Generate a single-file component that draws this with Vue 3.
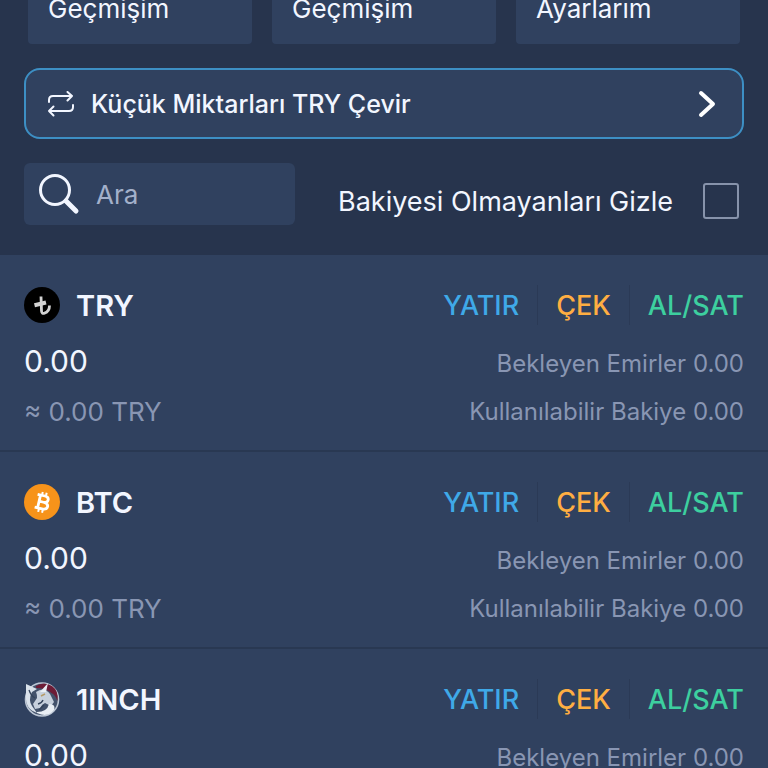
<script setup>
import {ref, computed} from "vue";

const tabs = ["İşlem Geçmişim", "Emir Geçmişim", "Hesap Ayarlarım"];

const coins = ref([
  {symbol: "TRY", amount: "0.00", value: "0.00", orders: "0.00", available: "0.00"},
  {symbol: "BTC", amount: "0.00", value: "0.00", orders: "0.00", available: "0.00"},
  {symbol: "1INCH", amount: "0.00", value: "0.00", orders: "0.00", available: "0.00"}
]);

const search = ref("");
const hideEmpty = ref(false);

const lastWord = (label)=> label.split(" ").pop();

const visibleCoins = computed(()=>{
  return coins.value.filter((coin)=>{
    if(hideEmpty.value && Number(coin.amount) === 0) return false;
    return coin.symbol.toLowerCase().includes(search.value.toLowerCase());
  });
});
</script>

<template>
  <div class="wallet">
    <header class="top">
      <nav class="tabs">
        <button v-for="tab in tabs" :key="tab" class="tab">{{ lastWord(tab) }}</button>
      </nav>

      <button class="convert">
        <svg class="convert-icon" viewBox="0 0 28 26" fill="none" stroke="currentColor" stroke-width="2" stroke-linecap="round" stroke-linejoin="round">
          <path d="M2 11V9q0-4 4-4h19M20.500 1L25 5l-4.500 4.500" />
          <path d="M26 14v2q0 4-4 4H2M6.500 15.500L2 20l4.500 4.500" />
        </svg>
        <span class="convert-text">Küçük Miktarları TRY Çevir</span>
        <svg class="convert-arrow" viewBox="0 0 18 30" fill="none" stroke="currentColor" stroke-width="4" stroke-linecap="round" stroke-linejoin="round">
          <path d="M3 4l12 11L3 26" />
        </svg>
      </button>

      <div class="filters">
        <label class="search">
          <svg class="search-icon" viewBox="0 0 42 42" fill="none" stroke="currentColor" stroke-linecap="round">
            <circle cx="17" cy="17" r="14.500" stroke-width="3" />
            <path d="M28 28l10 10" stroke-width="5" />
          </svg>
          <input v-model="search" class="search-input" type="text" placeholder="Ara" aria-label="Ara">
        </label>
        <label class="hide">
          <span>Bakiyesi Olmayanları Gizle</span>
          <input v-model="hideEmpty" class="hide-box" type="checkbox">
        </label>
      </div>
    </header>

    <main class="list">
      <section v-for="coin in visibleCoins" :key="coin.symbol" class="coin">
        <div class="line line-head">
          <div class="coin-name">
            <svg v-if="coin.symbol === 'TRY'" class="coin-icon" viewBox="0 0 36 36" fill="none">
              <circle cx="18" cy="18" r="18" fill="#000" />
              <g stroke="#d3d3d3">
                <path d="M17 9.500l.5 14.500q.2 3 3 2.200Q25.500 24.500 25.500 18.500" stroke-width="2.800" />
                <path d="M10.500 18.300l11.500-2.800" stroke-width="4" />
              </g>
            </svg>
            <svg v-else-if="coin.symbol === 'BTC'" class="coin-icon" viewBox="0 0 36 36" fill="none">
              <circle cx="18" cy="18" r="18" fill="#f7931a" />
              <g transform="rotate(13 18 18)" stroke="#fff">
                <path d="M12 11.500h7.500q4 0 4 3.200t-4 3.200H15M19.500 17.900q5 0 5 3.400t-5 3.400H12M15 11.500v13.200" stroke-width="2.800" />
                <path d="M16.500 8v3M20.500 8v3M16.500 25v3.500M20.500 25v3.500" stroke-width="2" />
              </g>
            </svg>
            <svg v-else class="coin-icon" viewBox="0 0 36 36" fill="none">
              <circle cx="18" cy="18.500" r="16.500" fill="#43526b" stroke="#bcc6d4" stroke-width="1.600" />
              <path d="M12 5Q20 0 28 5q7 5 5.500 15-2-6-6-8-6-5-15.500-5z" fill="#6d1c36" />
              <path d="M2 3l11 5-5 3q-4 8 0 14l5 7Q1 28 2 15z" fill="#d9e1ea" />
              <path d="M12 11q8-6 14 2l4 8-3 4-6-3q-3 1-5 5l-5 1-2-5 4-6q0-4-1-6z" fill="#c7d0dc" />
              <path d="M16 11l8-9-2 9zM13 31q10 0 12-8 7 0 5 6-6 8-17 3z" fill="#e9eef4" />
              <path d="M5 9q2 6 6 8M14 23q4-1 5-4M20 24l-5 5" stroke="#34435a" stroke-width="1.300" />
              <path d="M17 15l4-2" stroke="#b59b67" stroke-width="1.500" />
            </svg>
            <span>{{ coin.symbol }}</span>
          </div>
          <div class="actions">
            <button class="action action-deposit">YATIR</button>
            <button class="action action-withdraw">ÇEK</button>
            <button class="action action-trade">AL/SAT</button>
          </div>
        </div>
        <div class="line line-amount">
          <span class="amount">{{ coin.amount }}</span>
          <span class="detail">Bekleyen Emirler {{ coin.orders }}</span>
        </div>
        <div class="line line-value">
          <span class="value">≈ {{ coin.value }} TRY</span>
          <span class="detail">Kullanılabilir Bakiye {{ coin.available }}</span>
        </div>
      </section>
    </main>
  </div>
</template>

<style>
body{
  margin: 0;
  background-color: #27344d;
}
</style>

<style scoped>
.wallet{
  height: 100vh;
  overflow: hidden;
  background-color: #30415f;
  color: #f2f6ff;
  font-family: Inter, "Liberation Sans", sans-serif;
  font-size: 26px;
}
.wallet *{
  box-sizing: border-box;
}
button, input{
  font-family: inherit;
  font-size: inherit;
  color: inherit;
  border: none;
  background: none;
  padding: 0;
  margin: 0;
}
button{
  cursor: pointer;
}

.top{
  display: flex;
  flex-direction: column;
  gap: 24px;
  padding: 0 24px 30px;
  background-color: #27344d;
}

.tabs{
  display: flex;
  gap: 20px;
  padding: 0 4px;
  margin-top: -8px;
}
.tab{
  flex: 1;
  height: 52px;
  padding: 0 20px 18px;
  border-radius: 4px;
  background-color: #30415f;
  line-height: 32px;
  text-align: left;
}

.convert{
  display: flex;
  align-items: center;
  height: 71px;
  padding: 0 26px 0 21px;
  border: 2px solid #3d8fc4;
  border-radius: 16px;
  background-color: #30415f;
  font-size: 25px;
  font-weight: 500;
}
.convert-icon{
  width: 28px;
  height: 26px;
}
.convert-text{
  flex: 1;
  margin-left: 16px;
  text-align: left;
}
.convert-arrow{
  width: 18px;
  height: 30px;
  color: #fff;
}

.filters{
  display: flex;
  justify-content: space-between;
  align-items: flex-end;
}
.search{
  display: flex;
  align-items: center;
  gap: 16px;
  width: 271px;
  height: 62px;
  padding: 0 14px;
  border-radius: 6px;
  background-color: #30415f;
}
.search-icon{
  flex: none;
  width: 42px;
  height: 42px;
}
.search-input{
  width: 100%;
  min-width: 0;
  outline: none;
}
.search-input::placeholder{
  color: #a3b0ca;
  opacity: 1;
}
.hide{
  display: flex;
  align-items: center;
  gap: 30px;
  height: 48px;
  padding-right: 5px;
  font-size: 27px;
  cursor: pointer;
}
.hide-box{
  appearance: none;
  width: 36px;
  height: 36px;
  border: 2px solid #8793ab;
  border-radius: 3px;
}
.hide-box:checked{
  background-color: #3fa9e8;
}

.coin{
  display: flex;
  flex-direction: column;
  gap: 8px;
  padding: 28px 24px 23px;
  border-bottom: 2px solid #293852;
}
.line{
  display: flex;
  justify-content: space-between;
  align-items: center;
}
.line-head{
  height: 44px;
}
.line-amount{
  height: 52px;
  line-height: 52px;
  align-items: baseline;
}
.line-value{
  height: 32px;
}
.coin-name{
  display: flex;
  align-items: center;
  gap: 16px;
  font-size: 29px;
  font-weight: 600;
}
.coin-icon{
  width: 36px;
  height: 36px;
}
.actions{
  display: flex;
}
.action{
  height: 40px;
  padding: 0 18px;
  font-size: 27px;
  font-weight: 500;
}
.action + .action{
  border-left: 1px solid #2b3a56;
}
.action:last-child{
  padding-right: 0;
}
.action-deposit{
  color: #3fa9e8;
}
.action-withdraw{
  color: #ffae42;
}
.action-trade{
  color: #3dcf9f;
}
.amount{
  font-size: 30px;
}
.value{
  font-size: 26px;
  color: #8996b3;
}
.detail{
  font-size: 24px;
  color: #8996b3;
}
</style>
